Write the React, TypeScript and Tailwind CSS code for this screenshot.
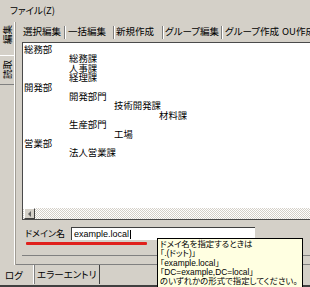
const tree: [number, string][] = [
  [0, "総務部"],
  [1, "総務課"],
  [1, "人事課"],
  [1, "経理課"],
  [0, "開発部"],
  [1, "開発部門"],
  [2, "技術開発課"],
  [3, "材料課"],
  [1, "生産部門"],
  [2, "工場"],
  [0, "営業部"],
  [1, "法人営業課"],
];

const indent = ["pl-[1px]", "pl-[46px]", "pl-[91px]", "pl-[136px]"];

const jpFont = "font-['Noto_Sans_CJK_JP',sans-serif]";
const jp = `${jpFont} [font-feature-settings:'palt']`;

function Sep() {
  return (
    <div className="flex h-[13px] shrink-0">
      <div className="w-px bg-[#808080]" />
      <div className="w-px bg-white" />
    </div>
  );
}

function Tabs() {
  return (
    <div className={`flex items-center h-[20px] text-[9.5px] leading-none whitespace-nowrap text-black ${jpFont}`}>
      <span className="w-[42px] pl-[1px] shrink-0">選択編集</span>
      <Sep />
      <span className="w-[47px] pl-[2px] shrink-0">一括編集</span>
      <Sep />
      <span className="w-[47px] pl-[1px] shrink-0">新規作成</span>
      <Sep />
      <span className="w-[57px] pl-[1px] shrink-0 [font-feature-settings:'palt']">グループ編集</span>
      <Sep />
      <span className="w-[57px] pl-[2px] shrink-0 [font-feature-settings:'palt']">グループ作成</span>
      <span className="pl-[2px] shrink-0">OU作成</span>
    </div>
  );
}

export default function App() {
  return (
    <div className="relative w-[310px] h-[287px] overflow-hidden bg-[#d4d0c8] text-black">
      {/* menu */}
      <div className={`h-[22px] pl-[10px] pt-[5px] text-[9.5px] leading-[10px] ${jp}`}>ファイル(Z)</div>

      <div className="flex h-[243px]">
        {/* vertical tabs */}
        <div className={`w-[14px] shrink-0 flex flex-col text-[9.5px] ${jpFont}`}>
          <div className="h-[33px] flex items-start justify-center pt-[3px]">
            <span className="[writing-mode:vertical-rl] [text-orientation:sideways] rotate-180 leading-[10px]">編集</span>
          </div>
          <div className="h-[30px] border-t border-b border-t-white border-b-[#808080] flex items-center justify-center">
            <span className="[writing-mode:vertical-rl] [text-orientation:sideways] rotate-180 leading-[10px]">読取</span>
          </div>
        </div>
        <div className="w-px bg-white" />
        <div className="w-px bg-[#a09c94]" />

        {/* outer panel */}
        <div className="flex-1 min-w-0 flex flex-col pl-[6px] border-b border-[#808080]">
          <Tabs />
          <div className="h-[178px] bg-white border-l border-t border-b border-[#4a4a4a] flex flex-col">
            <div className={`flex-1 pt-[2px] text-[9.4px] leading-[9.4px] whitespace-nowrap ${jpFont}`}>
              {tree.map(([lvl, name], i) => (
                <div key={i} className={`h-[9.4px] ${indent[lvl]}`}>{name}</div>
              ))}
            </div>
            <div className="h-[11px] flex bg-[repeating-conic-gradient(#d4d0c8_0%_25%,#ffffff_0%_50%)] bg-[length:2px_2px]">
              <div className="w-[11px] ml-px h-full bg-[#d4d0c8] border-t border-l border-white border-r border-b border-r-[#404040] border-b-[#404040] flex items-center justify-center">
                <svg width="4" height="6" viewBox="0 0 4 6">
                  <polygon points="3,0 0,3 3,6" fill="#606060" />
                </svg>
              </div>
            </div>
          </div>

          {/* domain row */}
          <div className="flex items-center mt-[7px] h-[13px]">
            <span className={`w-[49px] pl-[3px] text-[9px] leading-none shrink-0 ${jp}`}>ドメイン名</span>
            <div className="w-[184px] h-[13px] bg-white border-t border-l border-[#404040] flex items-center pl-[2px] font-['Liberation_Sans',sans-serif] text-[9px] leading-none">
              example.local<span className="w-px h-[9px] bg-black ml-px" />
            </div>
          </div>
          <div className="ml-[4px] mt-[2px] w-[121px] h-[2.5px] bg-[#e0201c] rounded-[1px]" />
          <div className="flex-1" />
          <div className="h-px bg-[#808080] mb-[8px]" />
        </div>
      </div>

      {/* bottom tabs */}
      <div className={`flex items-start h-[22px] text-[9.5px] leading-none ${jp}`}>
        <span className="pl-[5px] pt-[6px] w-[33px] shrink-0">ログ</span>
        <div className="h-[19px] border-l border-l-white border-r border-r-[#404040] px-[3px] pt-[5px] shadow-[inset_1px_0_0_#808080]">
          エラーエントリ
        </div>
      </div>
      <div className="absolute left-0 right-0 bottom-0 h-[2px] bg-[#404040]" />

      {/* tooltip */}
      <div className="absolute left-[157px] top-[238px] w-[146px] h-[52px] bg-[#ffffe1] border border-black px-[2px] pt-[1px] font-['Liberation_Sans','Noto_Sans_CJK_JP',sans-serif] [font-feature-settings:'palt'] text-[8.4px] leading-[9.3px] whitespace-nowrap">
        <div>ドメイ名を指定するときは</div>
        <div>「.(ドット)」</div>
        <div>「example.local」</div>
        <div>「DC=example,DC=local」</div>
        <div>のいずれかの形式で指定してください。</div>
      </div>
    </div>
  );
}
